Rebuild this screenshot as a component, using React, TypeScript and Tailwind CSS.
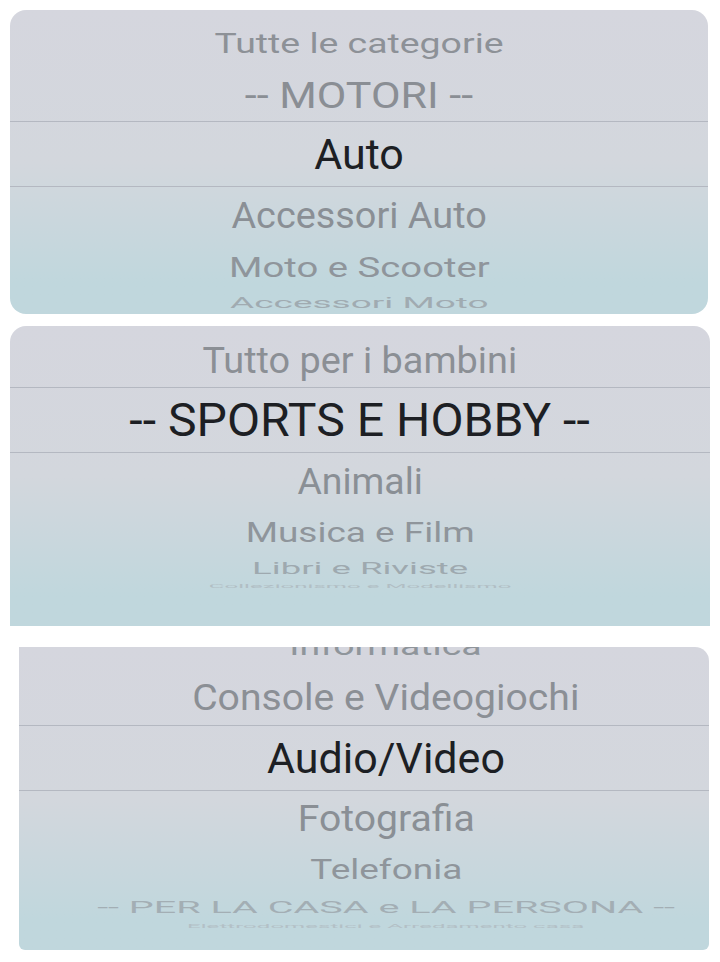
import React from "react";

type Row = {
  text: string;
  h: string;
  t: string;
  c: string;
  band?: boolean;
};

type Panel = {
  box: string;
  pad: string;
  rowPad: string;
  rows: Row[];
};

const panels: Panel[] = [
  {
    box: "ml-[10px] mt-[10px] w-[698px] h-[304px] rounded-[16px]",
    pad: "pt-[6px]",
    rowPad: "",
    rows: [
      { text: "Tutte le categorie", h: "h-[54px]", t: "scale-x-[0.87] scale-y-[0.66]", c: "text-[#8d9197]" },
      { text: "-- MOTORI --", h: "h-[51px]", t: "scale-x-[1.0] scale-y-[0.84]", c: "text-[#8a8e94]" },
      { text: "Auto", h: "h-[66px]", t: "scale-x-[1] scale-y-[1]", c: "text-[#1d1f24]", band: true },
      { text: "Accessori Auto", h: "h-[56px]", t: "scale-x-[0.88] scale-y-[0.86]", c: "text-[#8a8f95]" },
      { text: "Moto e Scooter", h: "h-[48px]", t: "scale-x-[0.89] scale-y-[0.66]", c: "text-[#8f959b]" },
      { text: "Accessori Moto", h: "h-[22px]", t: "scale-x-[0.86] scale-y-[0.36]", c: "text-[#a0abb1]" },
    ],
  },
  {
    box: "ml-[10px] mt-[12px] w-[700px] h-[300px] rounded-t-[16px]",
    pad: "pt-[7px]",
    rowPad: "",
    rows: [
      { text: "Tutto per i bambini", h: "h-[54px]", t: "scale-x-[0.88] scale-y-[0.84]", c: "text-[#8b8f95]" },
      { text: "-- SPORTS E HOBBY --", h: "h-[66px]", t: "scale-x-[1.12] scale-y-[1.06]", c: "text-[#1d1f24]", band: true },
      { text: "Animali", h: "h-[56px]", t: "scale-x-[0.87] scale-y-[0.84]", c: "text-[#8a8f95]" },
      { text: "Musica e Film", h: "h-[46px]", t: "scale-x-[0.86] scale-y-[0.64]", c: "text-[#8f959b]" },
      { text: "Libri e Riviste", h: "h-[26px]", t: "scale-x-[0.85] scale-y-[0.38]", c: "text-[#9ea9af]" },
      { text: "Collezionismo e Modellismo", h: "h-[8px]", t: "scale-x-[0.56] scale-y-[0.14]", c: "text-[#b1bec4]" },
    ],
  },
  {
    box: "ml-[19px] mt-[21px] w-[690px] h-[303px] rounded-tr-[14px] rounded-b-[6px]",
    pad: "-mt-[24px]",
    rowPad: " pl-[44px]",
    rows: [
      { text: "Informatica", h: "h-[46px]", t: "scale-x-[0.87] scale-y-[0.62]", c: "text-[#8f959b]" },
      { text: "Console e Videogiochi", h: "h-[56px]", t: "scale-x-[0.91] scale-y-[0.84]", c: "text-[#8b8f95]" },
      { text: "Audio/Video", h: "h-[66px]", t: "scale-x-[1] scale-y-[1]", c: "text-[#1d1f24]", band: true },
      { text: "Fotografia", h: "h-[54px]", t: "scale-x-[0.91] scale-y-[0.86]", c: "text-[#8a8f95]" },
      { text: "Telefonia", h: "h-[48px]", t: "scale-x-[0.86] scale-y-[0.66]", c: "text-[#8f959b]" },
      { text: "-- PER LA CASA e LA PERSONA --", h: "h-[28px]", t: "scale-x-[0.92] scale-y-[0.4]", c: "text-[#a3aeb4]" },
      { text: "Elettrodomestici e Arredamento casa", h: "h-[8px]", t: "scale-x-[0.56] scale-y-[0.14]", c: "text-[#b3c0c6]" },
    ],
  },
];

function PickerRow({ row, rowPad }: { row: Row; rowPad: string }) {
  return (
    <div
      className={
        "flex w-full shrink-0 items-center justify-center overflow-visible " +
        row.h +
        rowPad +
        (row.band ? " border-y border-[#b4b8c1]" : "")
      }
    >
      <span
        className={
          "block whitespace-nowrap text-[43px] leading-none font-normal " + row.t + " " + row.c
        }
      >
        {row.text}
      </span>
    </div>
  );
}

export default function App() {
  return (
    <div
      className="flex h-[962px] w-[720px] flex-col overflow-hidden bg-white"
      style={{ fontFamily: "Roboto, 'Noto Sans', 'Liberation Sans', sans-serif" }}
    >
      {panels.map((p, i) => (
        <div
          key={i}
          className={
            "shrink-0 overflow-hidden bg-gradient-to-b from-[#d5d6de] from-0% via-[#d3d7dd] via-50% to-[#c0d7dd] to-90% " +
            p.box
          }
        >
          <div className={"flex flex-col " + p.pad}>
            {p.rows.map((r, j) => (
              <PickerRow key={j} row={r} rowPad={p.rowPad} />
            ))}
          </div>
        </div>
      ))}
    </div>
  );
}
